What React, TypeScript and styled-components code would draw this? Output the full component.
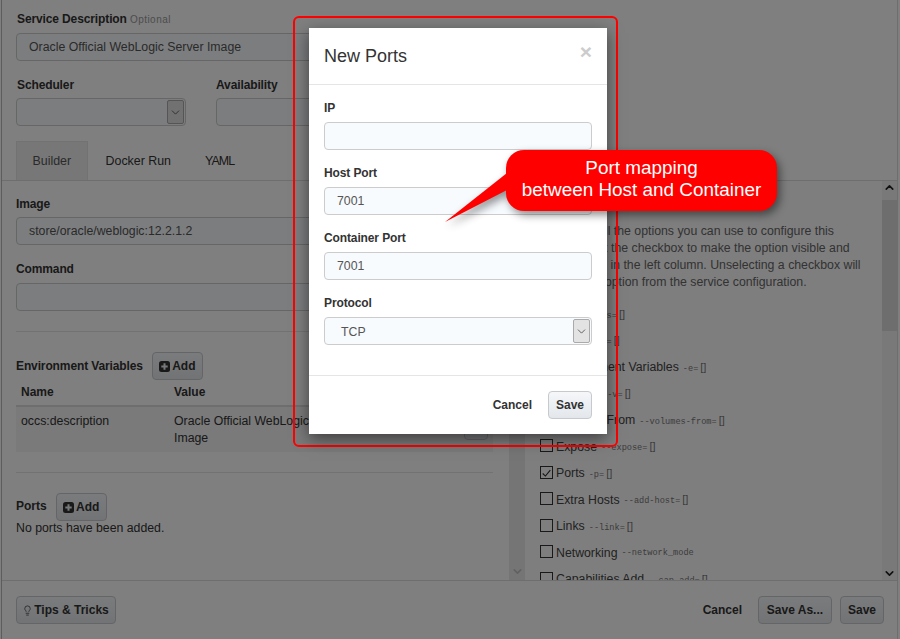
import React from "react";
import styled, { createGlobalStyle } from "styled-components";
import { ChevronDown, ChevronUp, Lightbulb } from "lucide-react";

const GlobalStyle = createGlobalStyle`
  html, body {
    margin: 0;
    padding: 0;
    background: #fff;
  }
  * {
    box-sizing: border-box;
  }
`;

const OPTIONS = [
  { name: "DNS", flag: "--dns=", checked: false },
  { name: "Labels", flag: "-l=", checked: false },
  { name: "Environment Variables", flag: "-e=", checked: false },
  { name: "Volumes", flag: "-v=", checked: false },
  { name: "Volumes From", flag: "--volumes-from=", checked: false },
  { name: "Expose", flag: "--expose=", checked: false },
  { name: "Ports", flag: "-p=", checked: true },
  { name: "Extra Hosts", flag: "--add-host=", checked: false },
  { name: "Links", flag: "--link=", checked: false },
  { name: "Networking", flag: "--network_mode", checked: false, noBrackets: true },
  { name: "Capabilities Add", flag: "--cap-add=", checked: false },
];

const PlusIcon = () => (
  <svg width="11" height="11" viewBox="0 0 11 11">
    <rect width="11" height="11" rx="2.5" fill="#333" />
    <path d="M5.5 2.3v6.4M2.3 5.5h6.4" stroke="#eef1f4" strokeWidth="2" />
  </svg>
);

const SelectBox: React.FC<{ value?: string; width?: number }> = ({ value, width }) => (
  <SelectWrap $width={width}>
    <SelectValue>{value}</SelectValue>
    <SelectArrow>
      <ChevronDown size={13} strokeWidth={1.5} />
    </SelectArrow>
  </SelectWrap>
);

const App: React.FC = () => {
  return (
    <Page>
      <GlobalStyle />
      <Dialog>
        <Top>
          <Label>
            Service Description <Optional>Optional</Optional>
          </Label>
          <Input readOnly defaultValue="Oracle Official WebLogic Server Image" />
          <SchedulerRow>
            <div>
              <Label>Scheduler</Label>
              <SelectBox width={170} />
            </div>
            <div>
              <Label>Availability</Label>
              <SelectBox width={170} />
            </div>
          </SchedulerRow>
        </Top>

        <Tabs>
          <Tab $active>Builder</Tab>
          <Tab>Docker Run</Tab>
          <Tab $tight>YAML</Tab>
        </Tabs>

        <Split>
          <LeftPane>
            <Label>Image</Label>
            <Input readOnly defaultValue="store/oracle/weblogic:12.2.1.2" />
            <CommandLabel>Command</CommandLabel>
            <Input readOnly />
            <Rule />
            <SectionRow>
              <Label>Environment Variables</Label>
              <Button $width={51}>
                <PlusIcon />
                Add
              </Button>
            </SectionRow>
            <TableHead>
              <span>Name</span>
              <span>Value</span>
            </TableHead>
            <TableRow>
              <span>occs:description</span>
              <span>Oracle Official WebLogic Server Image</span>
              <RowButton />
            </TableRow>
            <Rule />
            <SectionRow>
              <SectionTitle>Ports</SectionTitle>
              <Button $width={51}>
                <PlusIcon />
                Add
              </Button>
            </SectionRow>
            <Muted>No ports have been added.</Muted>
          </LeftPane>
          <ScrollTrack>
            <ChevronDown size={13} strokeWidth={3} />
          </ScrollTrack>

          <RightPane>
            <Intro>
              Below are all the options you can use to configure this
              <br />
              service. Tick the checkbox to make the option visible and
              <br />
              configurable in the left column. Unselecting a checkbox will
              <br />
              remove the option from the service configuration.
            </Intro>
            <OptionList>
              {OPTIONS.map((o) => (
                <OptionRow key={o.name}>
                  <CheckBox>
                    {o.checked && (
                      <svg width="13" height="13" viewBox="0 0 13 13">
                        <path d="M2 6.5l3.2 3L11 2.5" fill="none" stroke="#2c2c2c" strokeWidth="1.3" />
                      </svg>
                    )}
                  </CheckBox>
                  <span>{o.name}</span>
                  <Flag>
                    {o.flag}
                    {!o.noBrackets && <Brackets>[]</Brackets>}
                  </Flag>
                </OptionRow>
              ))}
            </OptionList>
          </RightPane>
          <RightScroll>
            <ChevronUp size={13} strokeWidth={3} />
            <Thumb />
            <ChevronDown size={13} strokeWidth={3} />
          </RightScroll>
        </Split>

        <Footer>
          <Button $width={100}>
            <TipIcon size={11} strokeWidth={1.6} />
            Tips &amp; Tricks
          </Button>
          <FooterRight>
            <LinkButton>Cancel</LinkButton>
            <Button $width={74}>Save As...</Button>
            <Button $width={44}>Save</Button>
          </FooterRight>
        </Footer>
      </Dialog>

      <Backdrop />
      <RedFrame />

      <Modal>
        <ModalHeader>
          <ModalTitle>New Ports</ModalTitle>
          <Close>×</Close>
        </ModalHeader>
        <ModalBody>
          <Field>
            <Label>IP</Label>
            <Input readOnly />
          </Field>
          <Field>
            <Label>Host Port</Label>
            <Input readOnly defaultValue="7001" />
          </Field>
          <Field>
            <Label>Container Port</Label>
            <Input readOnly defaultValue="7001" />
          </Field>
          <Field>
            <Label>Protocol</Label>
            <SelectBox value="TCP" />
          </Field>
        </ModalBody>
        <ModalFooter>
          <LinkButton>Cancel</LinkButton>
          <Button $width={44}>Save</Button>
        </ModalFooter>
      </Modal>

      <Callout>
        <CalloutTail width="62" height="74" viewBox="0 0 62 74">
          <path d="M62 0 L0 49 L62 17 Z" fill="#f00" />
        </CalloutTail>
        Port mapping
        <br />
        between Host and Container
      </Callout>
    </Page>
  );
};

export default App;

const Page = styled.div`
  position: relative;
  width: 900px;
  height: 639px;
  overflow: hidden;
  padding: 0 2px 0 1px;
  background: #fff;
  font-family: "Liberation Sans", Arial, sans-serif;
  font-size: 12.3px;
  color: #333;
`;

const Dialog = styled.div`
  height: 100%;
  display: flex;
  flex-direction: column;
  background: #fff;
  border-left: 1px solid #bbb;
  border-right: 1px solid #ddd;
`;

const Label = styled.div`
  height: 15px;
  margin-bottom: 6px;
  font-size: 12px;
  line-height: 15px;
  font-weight: bold;
  letter-spacing: -0.12px;
  color: #333;
`;

const Top = styled.div`
  padding: 12px 0 0 14px;
  width: 492px;

  ${Label} {
    padding-left: 1px;
  }
`;

const Optional = styled.span`
  margin-left: 0;
  font-size: 10px;
  font-weight: normal;
  color: #999;
  letter-spacing: 0.45px;
`;

const Input = styled.input`
  display: block;
  width: 100%;
  height: 28px;
  padding: 0 12px;
  border: 1px solid #ccc;
  border-radius: 4px;
  background: #f8fbfe;
  font-family: inherit;
  font-size: 12.3px;
  color: #555;
  outline: none;
`;

const SchedulerRow = styled.div`
  display: flex;
  gap: 30px;
  margin-top: 17px;

  ${Label} {
    margin-bottom: 5px;
  }

  div + div ${Label} {
    padding-left: 0;
  }
`;

const SelectWrap = styled.div<{ $width?: number }>`
  display: flex;
  align-items: center;
  justify-content: space-between;
  width: ${({ $width }) => ($width ? `${$width}px` : "100%")};
  height: 28px;
  padding: 1px 1px 1px 16px;
  border: 1px solid #ccc;
  border-radius: 4px;
  background: #f8fbfe;
  color: #555;
`;

const SelectValue = styled.span`
  padding-top: 1px;
`;

const SelectArrow = styled.span`
  display: flex;
  align-items: center;
  justify-content: center;
  width: 17px;
  height: 100%;
  background: #e3e3e3;
  border: 1px solid #aaa;
  border-radius: 2px;
  color: #444;
`;

const Tabs = styled.div`
  display: flex;
  height: 40px;
  margin-top: 15px;
  padding-left: 14px;
  border-bottom: 1px solid #ddd;
`;

const Tab = styled.div<{ $active?: boolean; $tight?: boolean }>`
  display: flex;
  align-items: center;
  padding: 0 ${({ $active }) => ($active ? "15.5px" : "16px")} 1px;
  margin-right: ${({ $active }) => ($active ? "1px" : "0")};
  background: ${({ $active }) => ($active ? "#eee" : "transparent")};
  border: 1px solid ${({ $active }) => ($active ? "#e4e4e4" : "transparent")};
  border-bottom: none;
  font-size: 12.4px;
  letter-spacing: ${({ $tight }) => ($tight ? "-0.9px" : "0")};
  color: ${({ $active }) => ($active ? "#555" : "#333")};
`;

const Split = styled.div`
  flex: 1;
  min-height: 0;
  display: flex;
`;

const LeftPane = styled.div`
  width: 507px;
  flex: none;
  padding: 16px 16px 0 14px;
  overflow: hidden;

  > ${Label} {
    margin-bottom: 5px;
  }
`;

const CommandLabel = styled(Label)`
  && {
    margin-top: 17px;
    margin-bottom: 6px;
  }
`;

const Rule = styled.hr`
  margin: 20px 0;
  border: none;
  border-top: 1px solid #e5e5e5;
`;

const SectionRow = styled.div`
  display: flex;
  align-items: center;
  gap: 9px;
  height: 28px;

  ${Label} {
    margin: 0;
  }
`;

const SectionTitle = styled.div`
  padding-bottom: 2px;
  font-size: 12px;
  font-weight: bold;
`;

const Button = styled.button<{ $width?: number }>`
  display: inline-flex;
  align-items: center;
  justify-content: center;
  gap: 2px;
  width: ${({ $width }) => ($width ? `${$width}px` : "auto")};
  height: 28px;
  padding: 0;
  border: 1px solid #c6cace;
  border-radius: 4px;
  background: linear-gradient(#f5f7f9, #e3e7eb);
  font-family: inherit;
  font-size: 12px;
  font-weight: bold;
  color: #333;
  white-space: nowrap;
`;

const TipIcon = styled(Lightbulb)`
  margin: 0 -1px;
`;

const LinkButton = styled.span`
  font-size: 12px;
  font-weight: bold;
  color: #333;
`;

const TableHead = styled.div`
  display: grid;
  grid-template-columns: 153px 1fr;
  height: 27px;
  padding: 0 5px 1px;
  align-items: center;
  border-bottom: 2px solid #ddd;
  font-size: 12px;
  font-weight: bold;
`;

const TableRow = styled.div`
  display: grid;
  grid-template-columns: 153px 200px 1fr;
  height: 45px;
  padding: 6px 5px 0;
  background: #f4f4f4;
  line-height: 17px;
`;

const RowButton = styled.div`
  justify-self: end;
  width: 24px;
  height: 27px;
  border: 1px solid #c6cace;
  border-radius: 4px;
  background: #eceff2;
`;

const Muted = styled.div`
  line-height: 15px;
  color: #333;
`;

const ScrollTrack = styled.div`
  width: 16px;
  flex: none;
  display: flex;
  align-items: flex-end;
  justify-content: center;
  padding-bottom: 2px;
  background: #ebebeb;
  color: #c2c2c2;
`;

const RightPane = styled.div`
  flex: 1;
  min-width: 0;
  padding: 42px 0 0 15px;
  overflow: hidden;
  background: #fdfdfd;
`;

const Intro = styled.p`
  margin: 0 0 10px;
  line-height: 17px;
  color: #666;
  white-space: nowrap;
`;

const OptionList = styled.div`
  display: flex;
  flex-direction: column;
`;

const OptionRow = styled.div`
  display: flex;
  align-items: center;
  flex: none;
  height: 26.5px;
  color: #444;
`;

const CheckBox = styled.span`
  display: inline-flex;
  width: 13px;
  height: 13px;
  margin: -2px 3px 0 0;
  border: 1px solid #333;
`;

const Flag = styled.span`
  margin-left: 4px;
  font-family: "Liberation Mono", monospace;
  font-size: 8.6px;
  color: #777;
`;

const Brackets = styled.span`
  font-family: "Liberation Sans", sans-serif;
  font-size: 11px;
  margin-left: 2px;
`;

const RightScroll = styled.div`
  width: 15px;
  flex: none;
  display: flex;
  flex-direction: column;
  align-items: center;
  background: #f3f3f3;
  color: #222;
`;

const Thumb = styled.div`
  align-self: stretch;
  flex: none;
  height: 131px;
  margin: 6px 0 auto;
  background: #dcdcdc;
`;

const Footer = styled.div`
  flex: none;
  height: 59px;
  display: flex;
  align-items: center;
  justify-content: space-between;
  padding: 0 13px 0 14px;
  background: #fff;
  border-top: 1px solid #ddd;
`;

const FooterRight = styled.div`
  display: flex;
  align-items: center;
  gap: 8px;

  ${LinkButton} {
    margin-right: 8px;
  }
`;

const Backdrop = styled.div`
  position: absolute;
  inset: 0;
  background: rgba(0, 0, 0, 0.5);
`;

const RedFrame = styled.div`
  position: absolute;
  left: 293px;
  top: 16px;
  width: 325px;
  height: 431px;
  border: 2px solid #f00;
  border-radius: 6px;
`;

const Modal = styled.div`
  position: absolute;
  left: 309px;
  top: 28px;
  width: 298px;
  height: 406px;
  background: #fff;
  box-shadow: 0 5px 15px rgba(0, 0, 0, 0.5);
`;

const ModalHeader = styled.div`
  display: flex;
  justify-content: space-between;
  height: 57px;
  padding: 15px;
  border-bottom: 1px solid #e5e5e5;
`;

const ModalTitle = styled.div`
  font-size: 18px;
  line-height: 26px;
  color: #333;
`;

const Close = styled.div`
  margin-top: -4px;
  font-size: 21px;
  line-height: 26px;
  font-weight: bold;
  color: #ccc;
`;

const ModalBody = styled.div`
  padding: 15px 15px 0;
`;

const Field = styled.div`
  margin-bottom: 15px;
  padding-top: 1px;
`;

const ModalFooter = styled.div`
  display: flex;
  align-items: center;
  justify-content: flex-end;
  gap: 16px;
  height: 59px;
  margin-top: 30px;
  padding: 0 15px;
  border-top: 1px solid #e5e5e5;
`;

const Callout = styled.div`
  position: absolute;
  left: 506px;
  top: 150px;
  width: 271px;
  height: 61px;
  padding-top: 7px;
  border-radius: 18px;
  background: #f00;
  color: #fff;
  font-size: 18.9px;
  line-height: 22px;
  text-align: center;
  filter: drop-shadow(3px 4px 4px rgba(0, 0, 0, 0.45));
`;

const CalloutTail = styled.svg`
  position: absolute;
  left: -61px;
  top: 23px;
`;
